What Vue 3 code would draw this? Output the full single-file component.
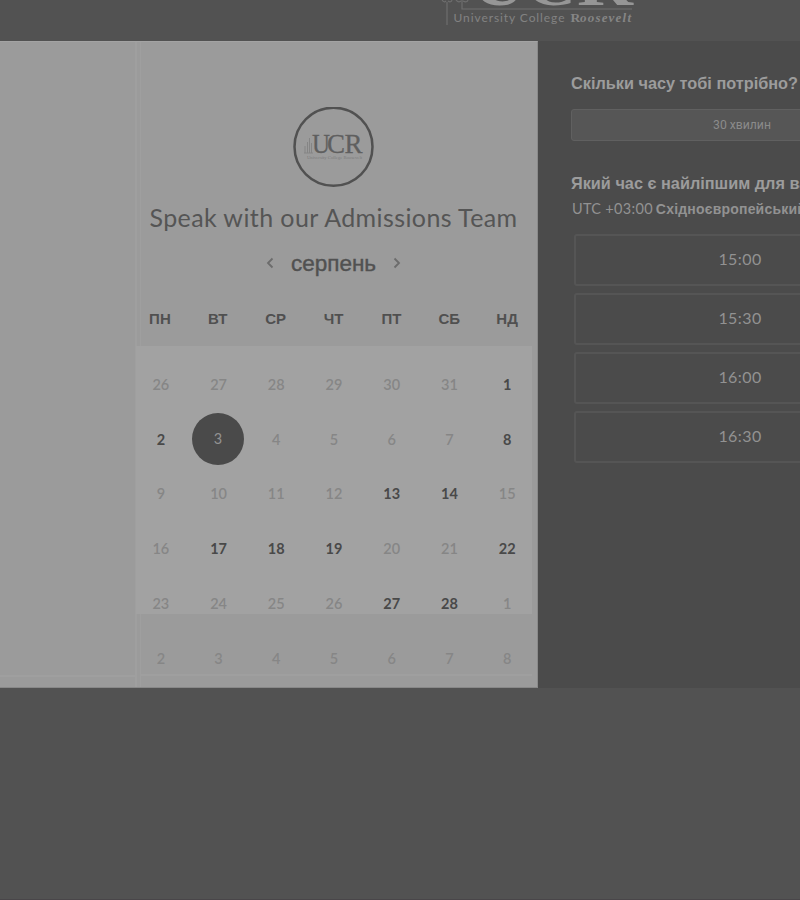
<script setup>
const weekdays = ['ПН', 'ВТ', 'СР', 'ЧТ', 'ПТ', 'СБ', 'НД']
const numbers = [26, 27, 28, 29, 30, 31, ...Array.from({ length: 28 }, (_, i) => i + 1), 1, 2, 3, 4, 5, 6, 7, 8]
const open = [1, 2, 8, 13, 14, 17, 18, 19, 22, 27, 28]
const days = numbers.map((n, i) => ({
  n,
  open: i > 5 && i < 34 && open.includes(n),
  selected: i === 8
}))
const slots = ['15:00', '15:30', '16:00', '16:30']
</script>

<template>
  <div class="page">
    <header class="top">
      <svg class="brand" width="220" height="41" viewBox="0 0 220 41">
        <g fill="none" stroke="#6e6e6e" stroke-width="1.2">
          <path d="M17 25V2M32 0V9H202" />
          <path d="M12 0Q14 3 16 1M18 1Q21 3 22 0M26 0Q28 3 31 1M33 1Q37 3 38 0" />
        </g>
        <g class="brand-big">
          <text x="42" y="5" textLength="54" lengthAdjust="spacingAndGlyphs">U</text>
          <text x="96" y="5" textLength="50" lengthAdjust="spacingAndGlyphs">C</text>
          <text x="147" y="5" textLength="56" lengthAdjust="spacingAndGlyphs">R</text>
        </g>
        <text class="brand-sub" x="23.500" y="22" textLength="111">University College</text>
        <text class="brand-serif" x="140.500" y="22">R</text>
        <text class="brand-serif ital" x="150" y="22" textLength="51">oosevelt</text>
      </svg>
    </header>
    <main class="booking">
      <section class="calendar">
        <div class="avatar">
          <svg width="82" height="82" viewBox="0 0 82 82">
            <circle cx="40.500" cy="39.700" r="39" fill="none" stroke="#515151" stroke-width="2.500" />
            <path d="M12 46V39M14.500 46V35M16.500 46V31M18.500 46V36M11 46H20" stroke="#858585" fill="none" stroke-width="1" />
            <g class="mini">
              <text x="19" y="46" textLength="18" lengthAdjust="spacingAndGlyphs">U</text>
              <text x="34" y="46" textLength="18" lengthAdjust="spacingAndGlyphs">C</text>
              <text x="51.500" y="46" textLength="18" lengthAdjust="spacingAndGlyphs">R</text>
            </g>
            <text class="mini-sub" x="14" y="51.500" textLength="55" lengthAdjust="spacingAndGlyphs">University College Roosevelt</text>
          </svg>
        </div>
        <h1>Speak with our Admissions Team</h1>
        <div class="month">
          <svg width="8" height="12" viewBox="0 0 8 12"><path d="M6.500 1.500L2 6L6.500 10.500" /></svg>
          <span>серпень</span>
          <svg width="8" height="12" viewBox="0 0 8 12"><path d="M1.500 1.500L6 6L1.500 10.500" /></svg>
        </div>
        <div class="week"><span v-for="d in weekdays" :key="d">{{ d }}</span></div>
        <div class="days">
          <span v-for="(d, i) in days" :key="i" :class="{ open: d.open, selected: d.selected }"><b>{{ d.n }}</b></span>
        </div>
      </section>
      <section class="times">
        <h2>Скільки часу тобі потрібно?</h2>
        <div class="duration">30 хвилин</div>
        <h2 class="q2">Який час є найліпшим для вас?</h2>
        <div class="zone"><span>UTC +03:00</span> <b>Східноєвропейський час</b></div>
        <div class="slots"><div v-for="s in slots" :key="s" class="slot">{{ s }}</div></div>
      </section>
    </main>
  </div>
</template>

<style>
body { margin: 0; background: #525252; }
</style>

<style scoped>
* { box-sizing: border-box; }
.page { width: 800px; height: 900px; overflow: hidden; background: #525252; border-bottom: 1px solid #494649; font-family: Lato, "Liberation Sans", sans-serif; }
.top { height: 41px; padding-left: 430px; }
.brand { display: block; }
.brand-big { font: bold 60px "Liberation Serif", serif; fill: #969696; }
.brand-sub { font: 12px Lato, sans-serif; fill: #828282; }
.brand-serif { font: bold 13.500px "Liberation Serif", serif; fill: #858585; }
.brand-serif.ital { font-size: 13px; font-style: italic; }
.booking { display: flex; height: 647px; }
.calendar { width: 538px; flex: none; padding: 65px 1px 0 131px; border-top: 1px solid #a3a3a3; border-bottom: 1px solid #888; border-right: 1px solid #8a8a8a;
  background:
    linear-gradient(#9f9f9f, #9f9f9f) 135px 0 / 2px 100% no-repeat,
    linear-gradient(#9f9f9f, #9f9f9f) 140px 0 / 1px 100% no-repeat,
    linear-gradient(#9f9f9f, #9f9f9f) 0 633px / 135px 2px no-repeat,
    #9b9b9b; }
.avatar { display: flex; justify-content: center; height: 82px; }
.mini { font: 27px "Liberation Serif", serif; fill: #5f5f5f; stroke: #5f5f5f; stroke-width: 0.300px; }
.mini-sub { font: 5px "Liberation Serif", serif; fill: #7b7b7b; }
h1 { margin: 12px 0 0; height: 32px; line-height: 32px; font-size: 25px; font-weight: 400; letter-spacing: 0.400px; text-align: center; white-space: nowrap; color: #555; }
.month { display: flex; align-items: center; justify-content: center; gap: 17px; height: 30px; margin-top: 15px; font: 22.500px "Liberation Sans", sans-serif; color: #515151; -webkit-text-stroke: 0.400px #515151; }
.month span { padding-top: 2px; }
.month svg { fill: none; stroke: #6c6c6c; stroke-width: 1.800; }
.week, .days { display: grid; grid-template-columns: repeat(7, 1fr); }
.week { height: 68px; align-items: center; justify-items: center; padding-top: 12px; font: bold 15px "Liberation Sans", sans-serif; color: #505050; }
.days { height: 339px; padding: 11px 0 0 1px; grid-auto-rows: 54.800px; background: linear-gradient(#9f9f9f, #9f9f9f) 10px 328px / 391px 2px no-repeat, linear-gradient(#a2a2a2, #a2a2a2) 5px 0 / 396px 268px no-repeat; }
.days span { display: flex; align-items: center; justify-content: center; color: #868686; font-size: 14.500px; }
.days b { font-weight: 600; }
.days .open { color: #494949; }
.days .open b { font-weight: 700; }
.days .selected b { display: flex; flex: none; align-items: center; justify-content: center; width: 52px; height: 52px; margin: -1px 1px 0 0; border-radius: 50%; background: #4a4a4a; color: #929292; font-weight: 400; }
.times { flex: 1; min-width: 0; overflow: hidden; padding: 31px 0 0 33px; background: #4b4b4b; }
h2 { margin: 0; height: 22px; font: bold 16.300px/22px "Liberation Sans", sans-serif; color: #9c9c9c; white-space: nowrap; }
.duration { width: 342px; height: 32px; margin-top: 15px; border: 1px solid #606060; border-radius: 3px; background: #565656; color: #8b8b8b; font: 12.200px/30px Roboto, "Liberation Sans", sans-serif; text-align: center; }
.q2 { margin-top: 31px; }
.zone { height: 20px; margin-top: 5px; line-height: 20px; font-size: 14.500px; white-space: nowrap; color: #929292; letter-spacing: 0.300px; padding-left: 1px; }
.zone b { font-family: "Liberation Sans", sans-serif; font-size: 14px; letter-spacing: 0.200px; margin-left: -1px; }
.slots { display: grid; gap: 7px; margin: 15px 0 0 3px; width: 332px; }
.slot { height: 52px; border: 2px solid #555; border-radius: 3px; text-align: center; line-height: 46px; font-size: 16px; letter-spacing: 0.400px; color: #929292; }
</style>
